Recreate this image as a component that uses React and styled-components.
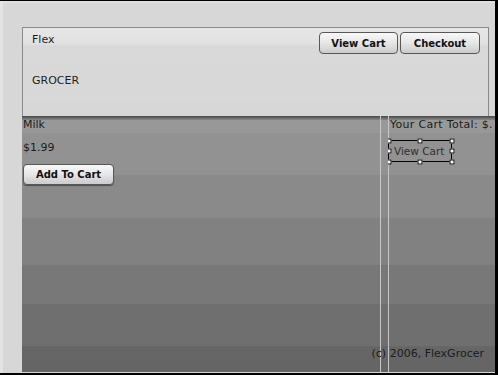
import styled, { createGlobalStyle } from 'styled-components';

const GlobalStyle = createGlobalStyle`
  html, body {
    margin: 0;
    padding: 0;
  }
  body {
    background: #d7d7d7;
    font-family: "DejaVu Sans", Verdana, sans-serif;
  }
`;

const Window = styled.div`
  background: #d7d7d7;
  border-bottom: 2px solid #000;
  border-right: 3px solid #000;
  border-top: 1px solid #000;
  box-shadow: inset 3px 0 0 #e3e3e3, inset 0 2px 0 #e0e0e0;
  box-sizing: border-box;
  display: flex;
  flex-direction: column;
  height: 375px;
  overflow: hidden;
  padding: 26px 0 1px 22px;
  width: 498px;
`;

const Header = styled.header`
  align-items: flex-start;
  background: linear-gradient(
    to bottom,
    #e6e6e6 0,
    #e2e2e2 15px,
    #d9d9d9 18px,
    #d7d7d7 100%
  );
  border: 1px solid #8a8a8a;
  border-bottom: none;
  box-sizing: border-box;
  display: flex;
  flex-shrink: 0;
  height: 89px;
  justify-content: space-between;
  padding: 0 8px 0 9px;
  width: 467px;
`;

const Brand = styled.div`
  display: flex;
  flex-direction: column;
  padding-top: 5px;
`;

const BrandLine = styled.span`
  color: #1f1f1f;
  font-size: 11px;
  line-height: 13px;
  margin-top: ${(p) => p.$gap || 0}px;
`;

const ButtonRow = styled.div`
  display: flex;
  gap: 2px;
  padding-top: 4px;
`;

const HaloButton = styled.button`
  background: linear-gradient(to bottom, #f8f8f8 0%, #e6e6e6 50%, #cbcbcb 100%);
  border: 1px solid #585858;
  border-radius: 4px;
  box-shadow: ${(p) => (p.$shadow ? '0 1px 1px rgba(0, 0, 0, 0.45)' : 'none')};
  box-sizing: border-box;
  color: #111;
  cursor: pointer;
  font-family: "DejaVu Sans", Verdana, sans-serif;
  font-size: 10px;
  font-weight: bold;
  height: ${(p) => p.$h || 22}px;
  padding: 0;
  width: ${(p) => p.$w}px;
`;

const Main = styled.main`
  background:
    linear-gradient(
      to right,
      transparent 358px,
      #c6c6c6 358px,
      #c6c6c6 359px,
      transparent 359px,
      transparent 366px,
      #c6c6c6 366px,
      #c6c6c6 367px,
      transparent 367px
    ),
    linear-gradient(
      to bottom,
      #484848 0,
      #686868 2px,
      #8a8a8a 4px,
      #989898 4px,
      #989898 17px,
      #929292 17px,
      #929292 59px,
      #8a8a8a 59px,
      #8a8a8a 102px,
      #818181 102px,
      #818181 149px,
      #787878 149px,
      #787878 188px,
      #6f6f6f 188px,
      #6f6f6f 230px,
      #6a6a6a 230px,
      #666666 231px,
      #656565 100%
    );
  display: flex;
  flex: 1;
  flex-direction: column;
  width: 100%;
`;

const Content = styled.div`
  display: grid;
  grid-template-columns: 366px 1fr;
  padding-top: 2px;
`;

const ProductCol = styled.div`
  align-items: flex-start;
  display: flex;
  flex-direction: column;
  padding-left: 1px;
`;

const Label = styled.span`
  color: #1c1c1c;
  font-size: 11px;
  line-height: 13px;
  margin-top: ${(p) => p.$gap || 0}px;
  white-space: nowrap;
`;

const CartCol = styled.div`
  align-items: flex-start;
  display: flex;
  flex-direction: column;
  overflow: hidden;
`;

const CartTotal = styled(Label)`
  letter-spacing: 0.3px;
  padding-left: 2px;
`;

const Selected = styled.div`
  align-items: center;
  border: 1px solid #000;
  box-sizing: border-box;
  color: #303030;
  display: flex;
  font-size: 10.5px;
  height: 22px;
  margin-top: 9px;
  padding-left: 5px;
  position: relative;
  white-space: nowrap;
  width: 64px;
`;

const Handle = styled.span`
  background: #fff;
  border: 1px solid #000;
  box-sizing: border-box;
  height: 5px;
  left: calc(${(p) => p.$x}% + ${(p) => p.$x / 100 - 0.5}px);
  position: absolute;
  top: calc(${(p) => p.$y}% + ${(p) => p.$y / 100 - 0.5}px);
  transform: translate(-50%, -50%);
  width: 5px;
`;

const Footer = styled.footer`
  color: #1c1c1c;
  font-size: 11px;
  line-height: 13px;
  margin-top: auto;
  padding: 0 11px 12px 0;
  text-align: right;
`;

const handles = [
  [0, 0], [50, 0], [100, 0],
  [0, 50], [100, 50],
  [0, 100], [50, 100], [100, 100],
];

export default function App() {
  return (
    <>
      <GlobalStyle />
      <Window>
        <Header>
          <Brand>
            <BrandLine>Flex</BrandLine>
            <BrandLine $gap={28}>GROCER</BrandLine>
          </Brand>
          <ButtonRow>
            <HaloButton $w={79}>View Cart</HaloButton>
            <HaloButton $w={80}>Checkout</HaloButton>
          </ButtonRow>
        </Header>
        <Main>
          <Content>
            <ProductCol>
              <Label>Milk</Label>
              <Label $gap={10}>$1.99</Label>
              <HaloButton $w={91} $h={21} $shadow style={{ marginTop: 10 }}>
                Add To Cart
              </HaloButton>
            </ProductCol>
            <CartCol>
              <CartTotal>Your Cart Total: $.</CartTotal>
              <Selected>
                View Cart
                {handles.map(([x, y]) => (
                  <Handle key={`${x}-${y}`} $x={x} $y={y} />
                ))}
              </Selected>
            </CartCol>
          </Content>
          <Footer>(c) 2006, FlexGrocer</Footer>
        </Main>
      </Window>
    </>
  );
}
